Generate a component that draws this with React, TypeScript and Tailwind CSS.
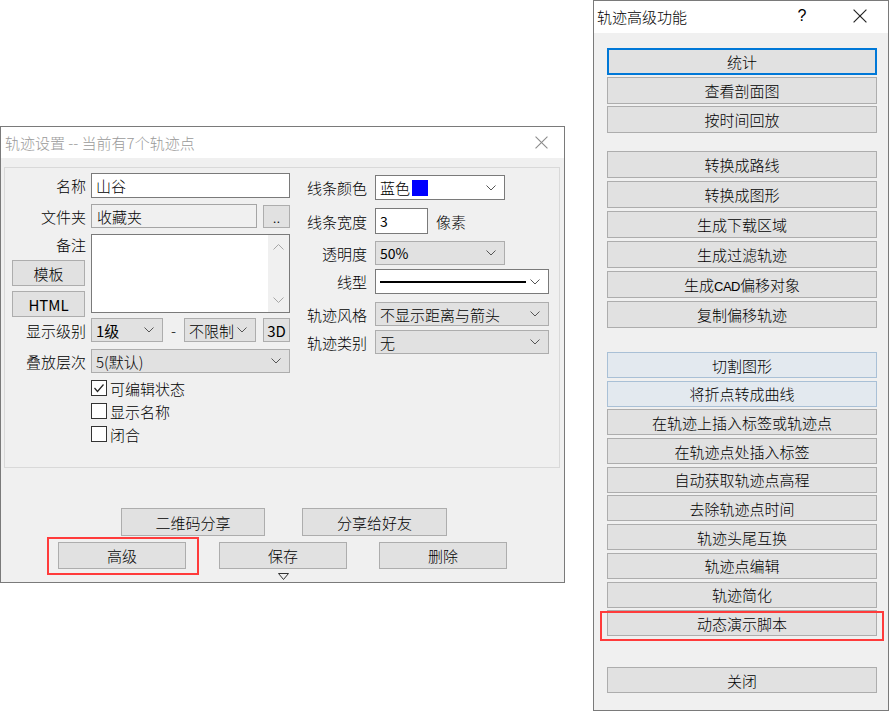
import React from "react";

function Chevron() {
  return (
    <svg width="10" height="6" viewBox="0 0 10 6" className="shrink-0">
      <polyline points="0.5,0.5 5,5 9.5,0.5" fill="none" stroke="#555" strokeWidth="1" />
    </svg>
  );
}

function CloseX({ color, size }: { color: string; size: number }) {
  return (
    <svg width={size} height={size} viewBox="0 0 12 12">
      <line x1="0.5" y1="0.5" x2="11.5" y2="11.5" stroke={color} strokeWidth="1" />
      <line x1="11.5" y1="0.5" x2="0.5" y2="11.5" stroke={color} strokeWidth="1" />
    </svg>
  );
}

function Check({ on, label }: { on?: boolean; label: string }) {
  return (
    <div className="flex items-center h-[16px] gap-[3px]">
      <div className="w-[16px] h-[16px] border border-[#333] bg-white flex items-center justify-center">
        {on && (
          <svg width="14" height="14" viewBox="0 0 14 14">
            <polyline points="2.5,7 5.5,10.5 11.5,3.5" fill="none" stroke="#222" strokeWidth="1.2" />
          </svg>
        )}
      </div>
      <span className="text-[15px] leading-none">{label}</span>
    </div>
  );
}

const btnBase = "bg-[#e1e1e1] flex items-center justify-center text-[15px] leading-none text-black";
const winBtn = `${btnBase} border border-[#adadad]`;
const greySel = "bg-[#e1e1e1] border border-[#adadad] flex items-center justify-between pl-[4px] pr-[8px] text-[15px] leading-none";
const whiteSel = "bg-white border border-[#7a7a7a] flex items-center justify-between pl-[4px] pr-[8px] text-[15px] leading-none";

const groups: string[][] = [
  ["统计", "查看剖面图", "按时间回放"],
  ["转换成路线", "转换成图形", "生成下载区域", "生成过滤轨迹", "生成CAD偏移对象", "复制偏移轨迹"],
  [
    "切割图形",
    "将折点转成曲线",
    "在轨迹上插入标签或轨迹点",
    "在轨迹点处插入标签",
    "自动获取轨迹点高程",
    "去除轨迹点时间",
    "轨迹头尾互换",
    "轨迹点编辑",
    "轨迹简化",
    "动态演示脚本",
  ],
];

export default function App() {
  return (
    <div className="relative w-[893px] h-[715px] bg-white overflow-hidden text-black font-light font-['Noto_Sans_CJK_SC','Microsoft_YaHei',sans-serif]">
      {/* track settings window */}
      <div className="absolute left-0 top-[126px] w-[565px] h-[457px] border border-[#7a7a7a] bg-[#f0f0f0] flex flex-col">
        <div className="h-[31px] shrink-0 bg-white flex items-center justify-between pl-[4px] pr-[16px]">
          <span className="text-[15px] leading-none text-[#9a9a9a]">轨迹设置 -- 当前有7个轨迹点</span>
          <CloseX color="#8a8a8a" size={13} />
        </div>

        <div className="mt-[9px] ml-[3px] w-[556px] h-[301px] shrink-0 border border-[#d9d9d9] flex">
          {/* left column */}
          <div className="w-[292px] pl-[6px] pt-[5px] flex flex-col">
            <div className="h-[25px] flex items-center gap-[5px]">
              <div className="w-[75px] text-right text-[15px] leading-none">名称</div>
              <div className="w-[199px] h-full bg-white border border-[#7a7a7a] flex items-center pl-[4px] text-[15px] leading-none">山谷</div>
            </div>
            <div className="mt-[6px] h-[24px] flex items-center gap-[5px]">
              <div className="w-[75px] text-right text-[15px] leading-none">文件夹</div>
              <div className="w-[166px] h-full bg-[#f0f0f0] border border-[#a5a5a5] flex items-center pl-[5px] text-[15px] leading-none">收藏夹</div>
              <div className={`${winBtn} ml-[1px] w-[27px] h-[23px] text-[12px]`}>..</div>
            </div>
            <div className="mt-[6px] h-[84px] flex items-start gap-[5px]">
              <div className="w-[75px] flex flex-col">
                <div className="h-[20px] flex items-center justify-end text-[15px] leading-none">备注</div>
                <div className={`${winBtn} mt-[6px] ml-[1px] w-[73px] h-[26px]`}>模板</div>
                <div className={`${winBtn} mt-[5px] ml-[1px] w-[73px] h-[26px] text-[14px] font-normal`}>HTML</div>
              </div>
              <div className="w-[199px] h-[79px] bg-white border border-[#7a7a7a] flex justify-end">
                <div className="w-[21px] h-full bg-[#f0f0f0] flex flex-col items-center justify-between py-[9px]">
                  <svg width="11" height="6" viewBox="0 0 11 6">
                    <polyline points="0.5,5.5 5.5,0.5 10.5,5.5" fill="none" stroke="#a6a6a6" strokeWidth="1" />
                  </svg>
                  <svg width="11" height="6" viewBox="0 0 11 6">
                    <polyline points="0.5,0.5 5.5,5.5 10.5,0.5" fill="none" stroke="#a6a6a6" strokeWidth="1" />
                  </svg>
                </div>
              </div>
            </div>
            <div className="h-[24px] flex items-center">
              <div className="w-[75px] text-right text-[15px] leading-none">显示级别</div>
              <div className={`${greySel} ml-[5px] w-[72px] h-full`}>
                <span className="font-normal">1级</span>
                <Chevron />
              </div>
              <div className="w-[21px] text-center text-[15px] leading-none">-</div>
              <div className={`${greySel} w-[72px] h-full`}>
                <span>不限制</span>
                <Chevron />
              </div>
              <div className={`${winBtn} ml-[7px] w-[27px] h-full text-[14px] font-normal`}>3D</div>
            </div>
            <div className="mt-[7px] h-[24px] flex items-center gap-[5px]">
              <div className="w-[75px] text-right text-[15px] leading-none">叠放层次</div>
              <div className={`${greySel} w-[199px] h-full`}>
                <span>5(默认)</span>
                <Chevron />
              </div>
            </div>
            <div className="mt-[7px] ml-[80px] flex flex-col gap-[7px]">
              <Check on label="可编辑状态" />
              <Check label="显示名称" />
              <Check label="闭合" />
            </div>
          </div>

          {/* right column */}
          <div className="pt-[7px] flex flex-col">
            <div className="h-[25px] flex items-center gap-[8px]">
              <div className="w-[70px] text-right text-[15px] leading-none">线条颜色</div>
              <div className={`${whiteSel} w-[130px] h-full`}>
                <span className="flex items-center gap-[2px]">
                  蓝色
                  <span className="inline-block w-[16px] h-[16px] bg-[#0000ff]" />
                </span>
                <Chevron />
              </div>
            </div>
            <div className="mt-[8px] h-[26px] flex items-center gap-[8px]">
              <div className="w-[70px] text-right text-[15px] leading-none">线条宽度</div>
              <div className="w-[53px] h-full bg-white border border-[#7a7a7a] flex items-center pl-[4px] text-[14px] leading-none font-normal">3</div>
              <div className="text-[15px] leading-none">像素</div>
            </div>
            <div className="mt-[7px] h-[24px] flex items-center gap-[8px]">
              <div className="w-[70px] text-right text-[15px] leading-none">透明度</div>
              <div className={`${greySel} w-[130px] h-full`}>
                <span className="text-[14px] font-normal">50%</span>
                <Chevron />
              </div>
            </div>
            <div className="mt-[4px] h-[25px] flex items-center gap-[8px]">
              <div className="w-[70px] text-right text-[15px] leading-none">线型</div>
              <div className={`${whiteSel} w-[174px] h-full`}>
                <span className="w-[146px] h-[2px] bg-black" />
                <Chevron />
              </div>
            </div>
            <div className="mt-[8px] h-[24px] flex items-center gap-[8px]">
              <div className="w-[70px] text-right text-[15px] leading-none">轨迹风格</div>
              <div className={`${greySel} w-[174px] h-full`}>
                <span>不显示距离与箭头</span>
                <Chevron />
              </div>
            </div>
            <div className="mt-[4px] h-[24px] flex items-center gap-[8px]">
              <div className="w-[70px] text-right text-[15px] leading-none">轨迹类别</div>
              <div className={`${greySel} w-[174px] h-full`}>
                <span>无</span>
                <Chevron />
              </div>
            </div>
          </div>
        </div>

        <div className="mt-[40px] ml-[120px] flex gap-[37px] h-[28px]">
          <div className={`${winBtn} w-[144px] h-full`}>二维码分享</div>
          <div className={`${winBtn} w-[145px] h-full`}>分享给好友</div>
        </div>
        <div className="mt-[6px] ml-[57px] flex h-[27px]">
          <div className={`${winBtn} w-[128px] h-full`}>高级</div>
          <div className={`${winBtn} ml-[33px] w-[128px] h-full`}>保存</div>
          <div className={`${winBtn} ml-[32px] w-[128px] h-full`}>删除</div>
        </div>
        <div className="mt-[4px] ml-[277px]">
          <svg width="11" height="7" viewBox="0 0 11 7">
            <polygon points="0.5,0.5 10.5,0.5 5.5,6.5" fill="none" stroke="#333" strokeWidth="1" />
          </svg>
        </div>
      </div>

      {/* advanced functions window */}
      <div className="absolute left-[593px] top-0 w-[296px] h-[711px] border border-[#7a7a7a] bg-[#f0f0f0] flex flex-col">
        <div className="h-[32px] shrink-0 bg-white flex items-center pl-[3px] pb-[2px]">
          <span className="text-[15px] leading-none">轨迹高级功能</span>
          <span className="ml-auto w-[20px] text-center text-[16px] leading-none font-['Liberation_Sans',sans-serif]">?</span>
          <span className="ml-[38px] mr-[18px] w-[20px] flex justify-center">
            <CloseX color="#222" size={14} />
          </span>
        </div>

        <div className="mt-[15px] ml-[13px] w-[270px] flex flex-col gap-[2px]">
          {groups[0].map((t, i) => (
            <div
              key={t}
              className={`${btnBase} h-[27px] ${i === 0 ? "border-2 border-[#0078d7]" : "border border-[#adadad]"}`}
            >
              {t}
            </div>
          ))}
        </div>

        <div className="mt-[18px] ml-[13px] w-[270px] flex flex-col gap-[3px]">
          {groups[1].map((t) => (
            <div key={t} className={`${winBtn} h-[27px]`}>
              {t === "生成CAD偏移对象" ? (
                <span>
                  生成<span className="text-[13px] font-['Liberation_Sans',sans-serif] tracking-[-0.5px]">CAD</span>偏移对象
                </span>
              ) : (
                t
              )}
            </div>
          ))}
        </div>

        <div className="mt-[24px] ml-[13px] w-[270px] flex flex-col gap-[2.7px]">
          {groups[2].map((t, i) => (
            <div
              key={t}
              className={
                i < 2
                  ? "h-[26px] bg-[#e3e9ef] border border-[#a9c0d6] flex items-center justify-center text-[15px] leading-none"
                  : `${winBtn} h-[26px]`
              }
            >
              {t}
            </div>
          ))}
        </div>

        <div className={`${winBtn} mt-[31px] ml-[13px] w-[270px] h-[26px]`}>关闭</div>
      </div>

      {/* red highlight marks */}
      <div className="absolute left-[47px] top-[537px] w-[152px] h-[38px] border-2 border-[#ff3b3b]" />
      <div className="absolute left-[600px] top-[611px] w-[284px] h-[30px] border-2 border-[#ff3b3b]" />
    </div>
  );
}
